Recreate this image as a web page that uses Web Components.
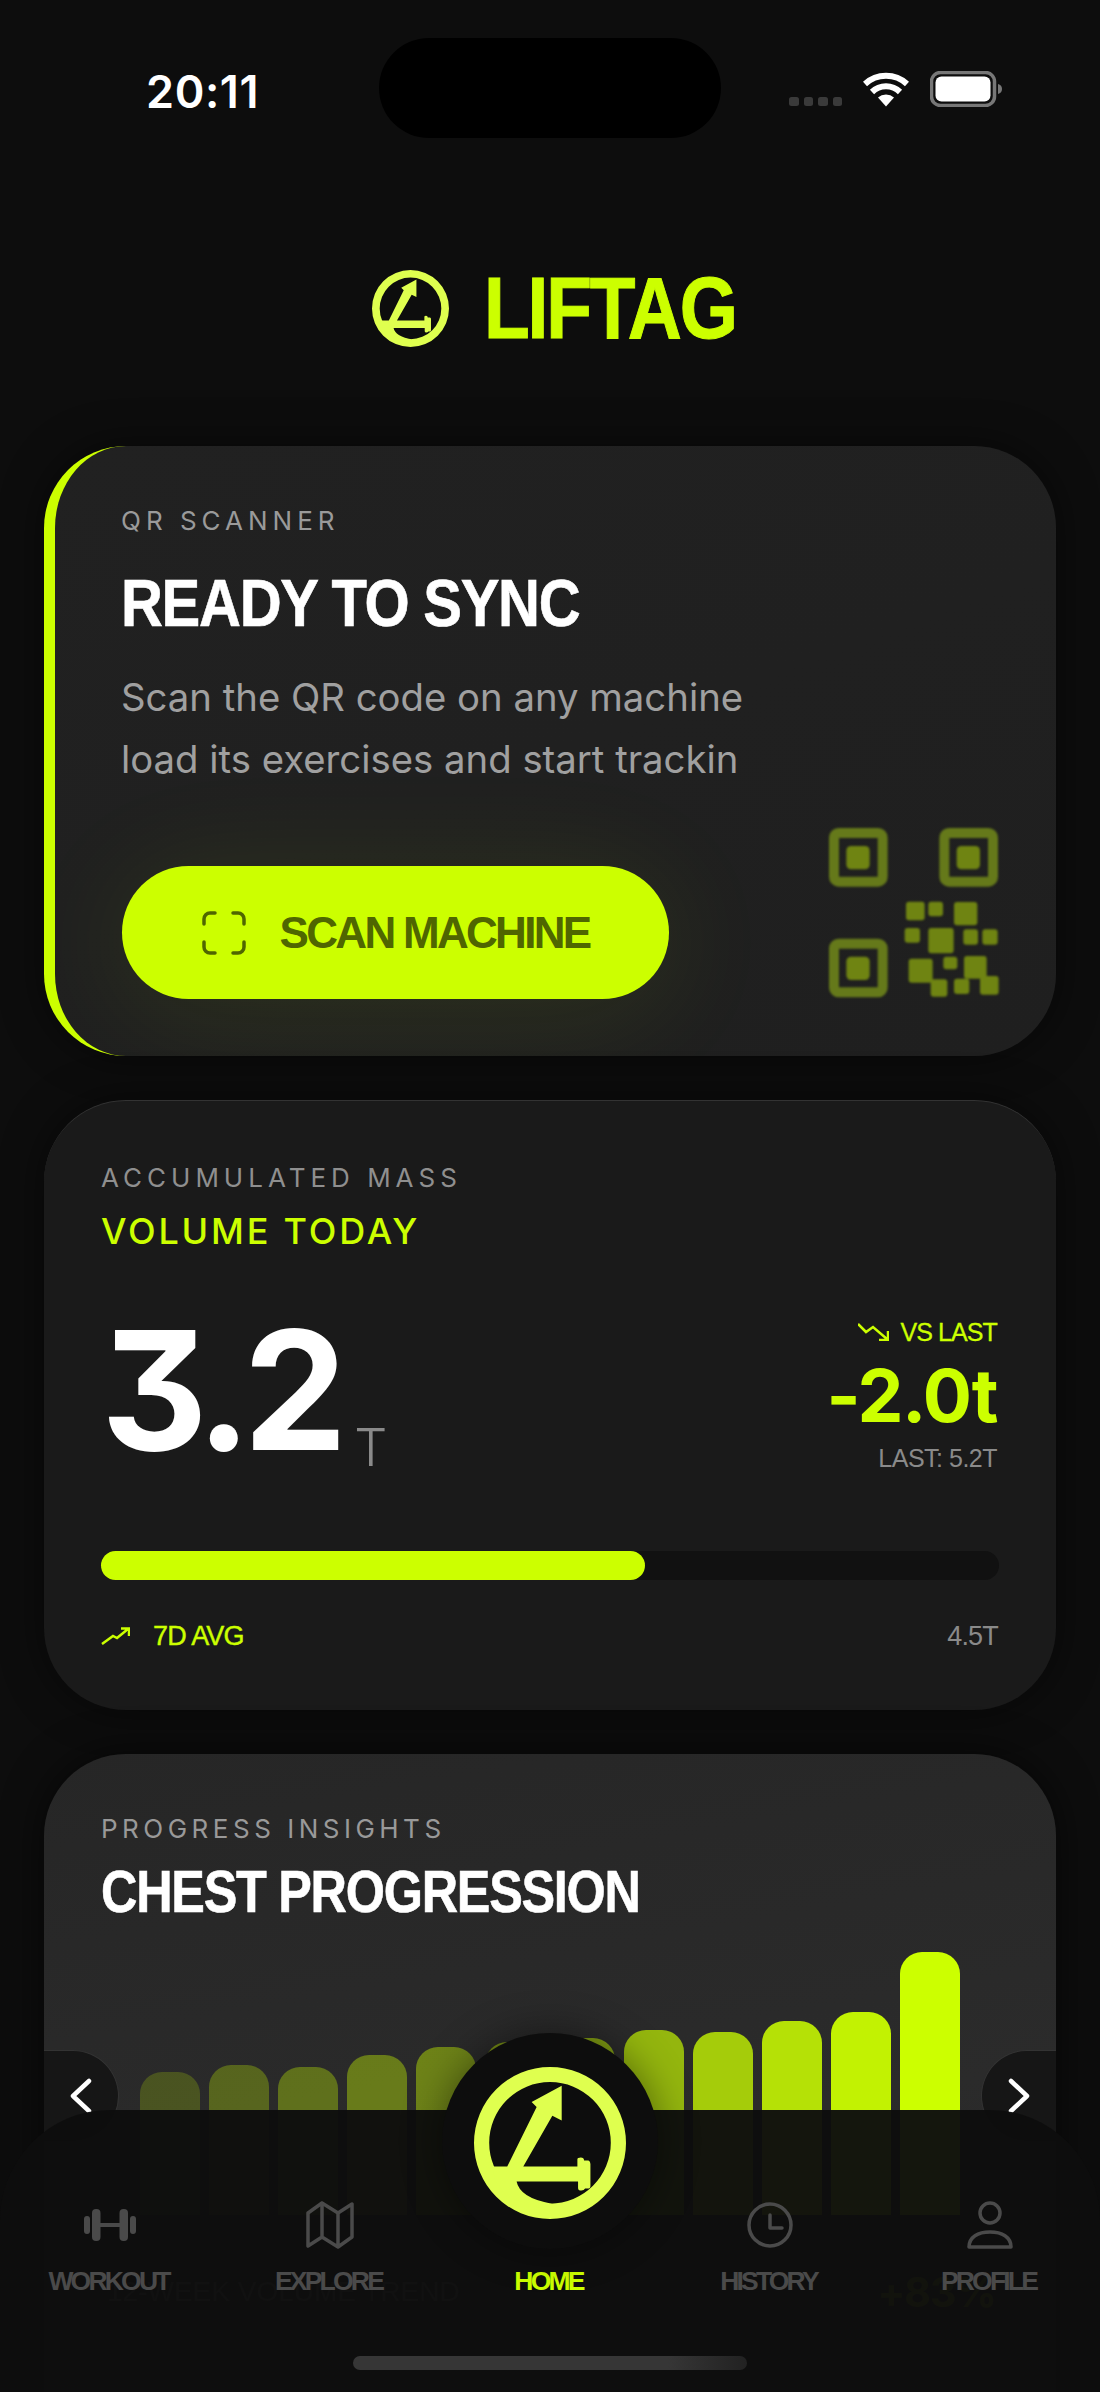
<!DOCTYPE html>
<html lang="en">
<head>
<meta charset="utf-8">
<title>Liftag</title>
<style>
  html, body { margin: 0; padding: 0; background: #0d0d0d; }
  body { width: 1100px; height: 2392px; overflow: hidden; position: relative; font-family: "Inter", "Liberation Sans", sans-serif; }
  main { display: flex; flex-direction: column; gap: 44px; padding: 0 44px; }
</style>
</head>
<body>
<status-bar></status-bar>
<app-header></app-header>
<main>
  <scan-card></scan-card>
  <volume-card></volume-card>
  <progress-card></progress-card>
</main>
<tab-bar></tab-bar>

<script>
(function () {
    const LOGO_PATHS = `
        <path fill-rule="evenodd" d="M390 142a227 227 0 1 0 0 455a227 227 0 1 0 0-455zM390 187a182 182 0 1 1 0 364a182 182 0 1 1 0-364z"/>
        <path d="M218 440H262L350 262L335 247L425 198V302L397 288L310 440H472V418Q472 413 482 413Q492 413 492 422H505Q511 424 511 432V498Q511 506 503 506H495Q492 512 484 512Q474 512 474 504V485H290Q300 535 395 551L390 575L260 530L225 480Z"/>`;

    class AppLogo extends HTMLElement {
        constructor() {
            super();
            let size = this.getAttribute("size") || "77";
            this.attachShadow({ mode: "open" }).innerHTML = `
              <style>
                :host { display: block; width: ${size}px; height: ${size}px; }
                svg { display: block; width: 100%; height: 100%; fill: #dfff4f; }
              </style>
              <svg viewBox="163 142 454 455">${LOGO_PATHS}</svg>`;
        }
    }
    customElements.define("app-logo", AppLogo);

    class StatusBar extends HTMLElement {
        constructor() {
            super();
            this.attachShadow({ mode: "open" }).innerHTML = `
              <style>
                :host { display: block; height: 150px; box-sizing: border-box; padding-top: 38px; }
                .row { display: flex; align-items: flex-start; padding-left: 146px; }
                .time { width: 233px; margin-top: 32px; font: 600 45px/44px "Inter", sans-serif; letter-spacing: .6px; color: #fff; }
                .island { width: 342px; height: 100px; border-radius: 50px; background: #000; }
                .dots { display: flex; gap: 5px; margin: 59px 0 0 68px; }
                .dots i { width: 9.5px; height: 9px; border-radius: 2.5px; background: #3a3a3a; }
                .wifi { width: 46px; height: 35px; margin: 34px 0 0 21px; }
                .batt { width: 73px; height: 36px; margin: 33px 0 0 21px; }
              </style>
              <div class="row">
                <div class="time">20:11</div>
                <div class="island"></div>
                <div class="dots"><i></i><i></i><i></i><i></i></div>
                <svg class="wifi" viewBox="0 0 46 35" fill="none" stroke="#fff" stroke-width="6">
                  <path d="M2 12A31 31 0 0 1 44 12"/>
                  <path d="M9 20A20 20 0 0 1 37 20"/>
                  <path d="M23 34.500L15 25.500A12 12 0 0 1 31 25.500Z" fill="#fff" stroke="none"/>
                </svg>
                <svg class="batt" viewBox="0 0 73 36">
                  <rect x="1.500" y="1.500" width="63" height="33" rx="9" fill="none" stroke="#777" stroke-width="3.500"/>
                  <rect x="5.500" y="5.500" width="55" height="25" rx="6" fill="#fff"/>
                  <path d="M68 13Q72 14 72 18Q72 22 68 23Z" fill="#777"/>
                </svg>
              </div>`;
        }
    }
    customElements.define("status-bar", StatusBar);

    class AppHeader extends HTMLElement {
        constructor() {
            super();
            this.attachShadow({ mode: "open" }).innerHTML = `
              <style>
                :host { display: flex; justify-content: center; height: 296px; box-sizing: border-box; padding: 120px 0 0 4px; gap: 35px; }
                .name { width: 248px; font: 700 87px/76px "Liberation Sans", sans-serif; letter-spacing: -2.500px; color: #ccff00; -webkit-text-stroke: 1px #ccff00; white-space: nowrap; transform: scaleX(.86); transform-origin: left; }
              </style>
              <app-logo size="77"></app-logo>
              <div class="name">LIFTAG</div>`;
        }
    }
    customElements.define("app-header", AppHeader);

    class ScanCard extends HTMLElement {
        constructor() {
            super();
            const blocks = [[318,305,56,56],[385,305,44,44],[462,306,70,70],[314,384,46,44],[385,384,76,76],[490,388,44,46],[547,388,46,46],
                [326,476,72,72],[430,470,42,38],[492,468,68,68],[392,538,50,52],[462,536,46,46],[540,528,56,56]];
            let rects = blocks.map(b => `<rect x="${b[0]}" y="${b[1]}" width="${b[2]}" height="${b[3]}" rx="9"/>`).join("");
            let finder = (x, y) => `<rect x="${x + 15}" y="${y + 15}" width="146" height="146" rx="14" fill="none" stroke="#65791a" stroke-width="30"/><rect x="${x + 52}" y="${y + 54}" width="70" height="70" rx="14"/>`;
            this.attachShadow({ mode: "open" }).innerHTML = `
              <style>
                :host { display: block; height: 610px; box-sizing: border-box; padding: 60px 54px 0 66px; background: linear-gradient(160deg, #212121 0%, #1f1f1f 100%); border-left: 11px solid #ccff00; border-radius: 82px; overflow: hidden; box-shadow: 0 0 40px rgba(0,0,0,.5); }
                .label { font: 400 26px/30px "Inter", sans-serif; letter-spacing: 5px; color: #9a9a9a; }
                h2 { margin: 31px 0 0; font: 700 66px/72px "Liberation Sans", sans-serif; letter-spacing: -1.500px; color: #fff; -webkit-text-stroke: .6px #fff; white-space: nowrap; transform: scaleX(.88); transform-origin: left; }
                .body { margin-top: 27px; font: 400 38.300px/62px "Inter", sans-serif; color: #a0a0a0; white-space: nowrap; }
                .row { display: flex; justify-content: space-between; margin-top: 38px; height: 171px; padding-left: 1px; }
                .btn { align-self: flex-end; display: flex; align-items: center; justify-content: center; gap: 34px; width: 547px; height: 133px; border-radius: 67px; background: #ccff00; color: #4f6600; font: 700 44px/50px "Liberation Sans", sans-serif; letter-spacing: -2.700px; box-shadow: 0 10px 120px rgba(204,255,0,.09); }
                .btn svg { width: 44px; height: 44px; flex: none; }
                .qr { width: 173px; height: 173px; flex: none; fill: #6f8412; filter: blur(1.100px); }
              </style>
              <div class="label">QR SCANNER</div>
              <h2>READY TO SYNC</h2>
              <div class="body">Scan the QR code on any machine<br>load its exercises and start trackin</div>
              <div class="row">
                <div class="btn">
                  <svg viewBox="0 0 44 44" fill="none" stroke="#4f6600" stroke-width="3.500" stroke-linecap="round">
                    <path d="M2 13V8a6 6 0 0 1 6-6h5M31 2h5a6 6 0 0 1 6 6v5M42 31v5a6 6 0 0 1-6 6h-5M13 42H8a6 6 0 0 1-6-6v-5"/>
                  </svg>
                  <span>SCAN MACHINE</span>
                </div>
                <svg class="qr" viewBox="87 84 519 519">
                  ${finder(87, 84)}${finder(418, 84)}${finder(87, 416)}${rects}
                </svg>
              </div>`;
        }
    }
    customElements.define("scan-card", ScanCard);

    class VolumeCard extends HTMLElement {
        constructor() {
            super();
            this.attachShadow({ mode: "open" }).innerHTML = `
              <style>
                :host { display: block; height: 610px; box-sizing: border-box; padding: 62px 57px 0; background: #1a1a1a; border-top: 1px solid #333; border-radius: 82px; box-shadow: 0 0 40px rgba(0,0,0,.5); }
                .label { font: 400 26px/30px "Inter", sans-serif; letter-spacing: 5px; color: #8f8f8f; }
                .sub { margin-top: 16px; font: 500 36px/44px "Inter", sans-serif; letter-spacing: 2.800px; color: #ccff00; }
                .stats { display: flex; justify-content: space-between; margin-top: 53px; }
                .big { display: flex; align-items: flex-end; }
                .num { font: 700 165px/166px "Inter", sans-serif; font-feature-settings: "cv09"; letter-spacing: -8px; color: #fff; }
                .unit { margin-left: 15px; font: 300 52px/50px "Inter", sans-serif; color: #8a8a8a; }
                .right { display: flex; flex-direction: column; align-items: flex-end; padding: 11px 2px 0 0; }
                .vs { display: flex; align-items: center; gap: 11px; font: 400 25px/30px "Liberation Sans", sans-serif; letter-spacing: -.9px; color: #ccff00; -webkit-text-stroke: .3px #ccff00; }
                .vs svg { width: 31px; height: 18px; }
                .delta { margin-top: 11px; font: 700 73px/76px "Inter", sans-serif; letter-spacing: -1.500px; color: #ccff00; }
                .last { margin-top: 9px; font: 400 25px/30px "Liberation Sans", sans-serif; letter-spacing: -.5px; color: #8a8a8a; }
                .track { margin-top: 78px; height: 29px; border-radius: 15px; background: #111; }
                .fill { width: 60.600%; height: 100%; border-radius: 15px; background: #ccff00; }
                .foot { display: flex; justify-content: space-between; align-items: center; margin-top: 41px; font: 400 27px/30px "Liberation Sans", sans-serif; letter-spacing: -.8px; }
                .avg { display: flex; align-items: center; gap: 23px; color: #ccff00; -webkit-text-stroke: .4px #ccff00; }
                .avg svg { width: 29px; height: 18px; }
                .val { color: #8a8a8a; padding-right: 1px; }
              </style>
              <div class="label">ACCUMULATED MASS</div>
              <div class="sub">VOLUME TODAY</div>
              <div class="stats">
                <div class="big"><div class="num">3.2</div><div class="unit">T</div></div>
                <div class="right">
                  <div class="vs">
                    <svg viewBox="0 0 31 18" fill="none" stroke="#ccff00" stroke-width="2.500"><path d="M0 1L8 9L15 4L29 16M30 8V17H21"/></svg>
                    <span>VS LAST</span>
                  </div>
                  <div class="delta">-2.0t</div>
                  <div class="last">LAST: 5.2T</div>
                </div>
              </div>
              <div class="track"><div class="fill"></div></div>
              <div class="foot">
                <div class="avg">
                  <svg viewBox="0 0 29 18" fill="none" stroke="#ccff00" stroke-width="2.500"><path d="M1 17L12 9L16 11L27 2M20 1.500H28V9"/></svg>
                  <span>7D AVG</span>
                </div>
                <div class="val">4.5T</div>
              </div>`;
        }
    }
    customElements.define("volume-card", VolumeCard);

    class ChartBar extends HTMLElement {
        constructor() {
            super();
            let h = this.getAttribute("h");
            let o = this.getAttribute("o");
            this.attachShadow({ mode: "open" }).innerHTML = `
              <style>
                :host { display: block; flex: 1; height: ${h}px; border-radius: 22px 22px 0 0; background: #ccff00; opacity: ${o}; }
              </style>`;
        }
    }
    customElements.define("chart-bar", ChartBar);

    class ProgressCard extends HTMLElement {
        constructor() {
            super();
            const bars = [[143,.2],[150,.28],[148,.33],[160,.38],[168,.42],[173,.48],[177,.54],[185,.66],[183,.76],[194,.86],[203,.94],[263,1]];
            let barHtml = bars.map(b => `<chart-bar h="${b[0]}" o="${b[1]}"></chart-bar>`).join("");
            this.attachShadow({ mode: "open" }).innerHTML = `
              <style>
                :host { display: block; position: relative; height: 800px; box-sizing: border-box; padding: 60px 57px 0; background: linear-gradient(170deg, #262626 0%, #2b2b2b 50%, #222 100%); border-radius: 82px 82px 0 0; box-shadow: 0 0 40px rgba(0,0,0,.6); }
                .label { font: 400 26px/30px "Inter", sans-serif; letter-spacing: 4.500px; color: #999; }
                h2 { margin: 15px 0 0; font: 700 60px/66px "Liberation Sans", sans-serif; letter-spacing: -1.500px; color: #fff; -webkit-text-stroke: .6px #fff; white-space: nowrap; transform: scaleX(.84); transform-origin: left; }
                .chart { display: flex; align-items: flex-end; gap: 9.100px; height: 263px; margin: 27px 39px 0; }
                .ghost { display: flex; justify-content: space-between; align-items: flex-start; margin-top: 52px; opacity: .6; }
                .trend { margin: 10px 0 0 6px; font: 400 28px/30px "Liberation Sans", sans-serif; color: #999; }
                .pct { margin-right: 3px; font: 700 41px/50px "Inter", sans-serif; letter-spacing: -1px; color: #ccff00; }
                .nav { position: absolute; top: 296px; width: 75px; height: 92px; box-sizing: border-box; background: #161616; border: 1.500px solid #333; display: flex; align-items: center; justify-content: center; }
                .nav svg { width: 22px; height: 36px; }
                .prev { left: 0; border-left: none; border-radius: 0 52px 52px 0; }
                .next { right: 0; border-right: none; border-radius: 52px 0 0 52px; }
              </style>
              <div class="label">PROGRESS INSIGHTS</div>
              <h2>CHEST PROGRESSION</h2>
              <div class="chart">${barHtml}</div>
              <div class="ghost">
                <div class="trend">12-WEEK VOLUME TREND</div>
                <div class="pct">+83%</div>
              </div>
              <div class="nav prev"><svg viewBox="0 0 22 36" fill="none" stroke="#fff" stroke-width="4.500" stroke-linecap="round" stroke-linejoin="round"><path d="M19 3L3 18L19 33"/></svg></div>
              <div class="nav next"><svg viewBox="0 0 22 36" fill="none" stroke="#fff" stroke-width="4.500" stroke-linecap="round" stroke-linejoin="round"><path d="M3 3L19 18L3 33"/></svg></div>`;
        }
    }
    customElements.define("progress-card", ProgressCard);

    class TabItem extends HTMLElement {
        constructor() {
            super();
            this.attachShadow({ mode: "open" }).innerHTML = `
              <style>
                :host { display: flex; flex-direction: column; align-items: center; color: #4a4a4a; }
                :host([active]) { color: #ccff00; }
                .icon { height: 48px; display: flex; align-items: center; justify-content: center; }
                .text { margin-top: 17px; font: 700 26.500px/30px "Liberation Sans", sans-serif; letter-spacing: -2.800px; white-space: nowrap; margin-left: -3px; }
              </style>
              <div class="icon"><slot name="icon"></slot></div>
              <div class="text"><slot></slot></div>`;
        }
    }
    customElements.define("tab-item", TabItem);

    class TabBar extends HTMLElement {
        constructor() {
            super();
            this.attachShadow({ mode: "open" }).innerHTML = `
              <style>
                :host { position: absolute; left: 0; right: 0; top: 2110px; bottom: 0; display: flex; flex-direction: column; box-sizing: border-box; padding-top: 91px; background: rgba(13,13,13,.965); border-radius: 110px 110px 0 0; }
                .items { display: grid; grid-template-columns: repeat(5, 1fr); }
                svg { display: block; }
                .line { fill: none; stroke: #4a4a4a; stroke-width: 3.500; stroke-linejoin: round; stroke-linecap: round; }
                .home { position: absolute; left: 442px; top: -77px; width: 216px; height: 216px; box-sizing: border-box; padding-top: 4px; border-radius: 50%; background: #0d0d0d; display: flex; align-items: center; justify-content: center; box-shadow: 0 0 40px rgba(0,0,0,.45); }
                .pill { align-self: center; width: 394px; height: 14px; margin-top: 60px; border-radius: 7px; background: linear-gradient(90deg, #363636 0%, #363636 80%, #222 100%); }
              </style>
              <div class="home"><app-logo size="152"></app-logo></div>
              <div class="items">
                <tab-item>
                  <svg slot="icon" width="52" height="32" viewBox="0 0 52 32" fill="#4a4a4a">
                    <rect x="0" y="7" width="6" height="18" rx="3"/><rect x="8" y="0" width="8.500" height="32" rx="4"/>
                    <rect x="16" y="14" width="20" height="4"/>
                    <rect x="35.500" y="0" width="8.500" height="32" rx="4"/><rect x="46" y="7" width="6" height="18" rx="3"/>
                  </svg>
                  WORKOUT
                </tab-item>
                <tab-item>
                  <svg slot="icon" class="line" width="48" height="48" viewBox="0 0 48 48"><path d="M2 12L16 2L32 12L46 3V36L32 46L16 36L2 45ZM16 2V36M32 12V46"/></svg>
                  EXPLORE
                </tab-item>
                <tab-item active>HOME</tab-item>
                <tab-item>
                  <svg slot="icon" class="line" width="48" height="48" viewBox="0 0 48 48"><circle cx="24" cy="24" r="21"/><path d="M24 14V27H36"/></svg>
                  HISTORY
                </tab-item>
                <tab-item>
                  <svg slot="icon" class="line" width="48" height="48" viewBox="0 0 48 48"><circle cx="24" cy="12" r="10"/><path d="M3 46C3 36 12 31 24 31S45 36 45 46Z"/></svg>
                  PROFILE
                </tab-item>
              </div>
              <div class="pill"></div>`;
        }
    }
    customElements.define("tab-bar", TabBar);
})();
</script>
</body>
</html>
